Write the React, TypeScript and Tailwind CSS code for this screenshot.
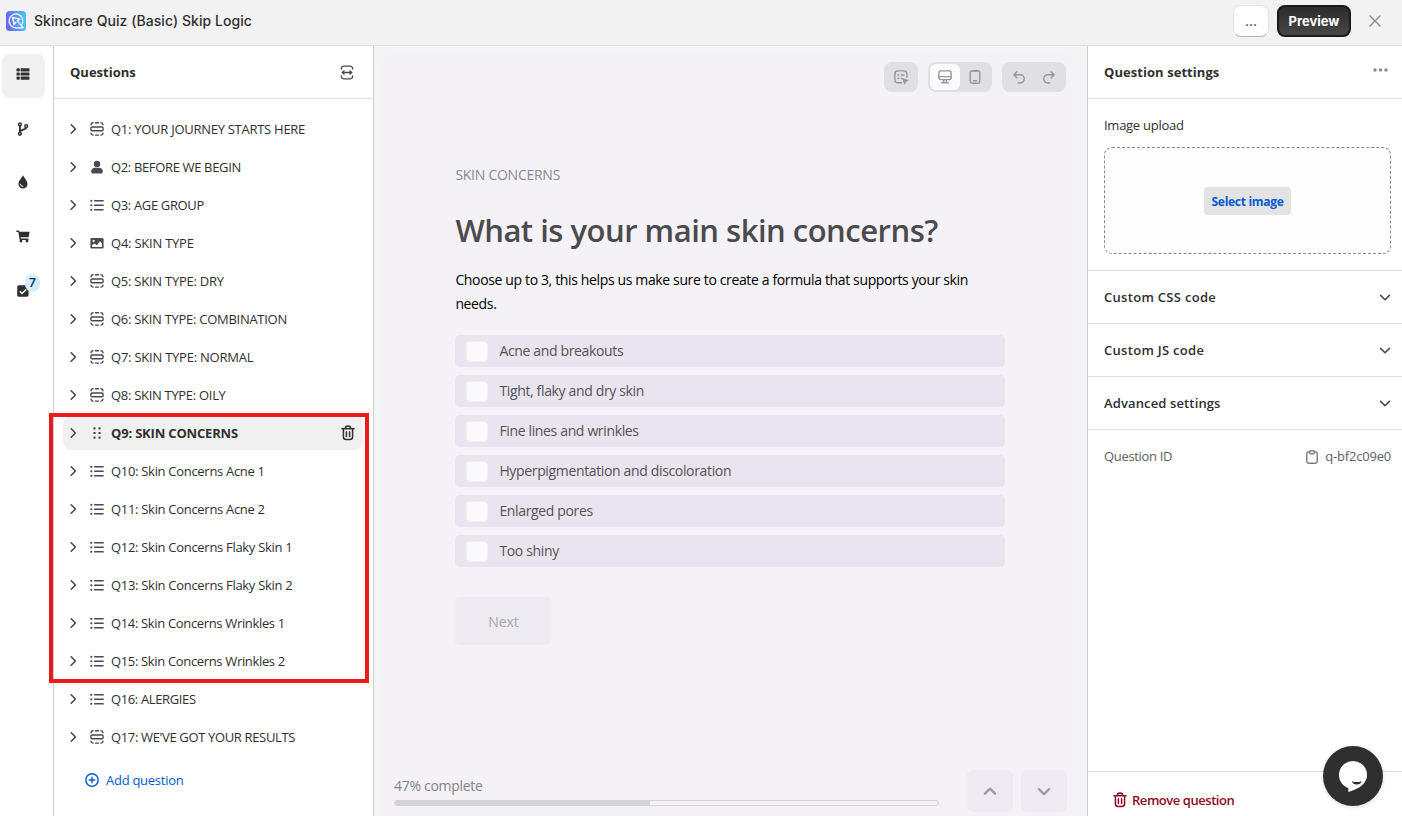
import React from "react";

type Kind = "section" | "person" | "list" | "image" | "drag";

const questions: { kind: Kind; label: string; fit: string }[] = [
  { kind: "section", label: "Q1: YOUR JOURNEY STARTS HERE", fit: "tracking-[-0.27px]" },
  { kind: "person", label: "Q2: BEFORE WE BEGIN", fit: "tracking-[-0.35px]" },
  { kind: "list", label: "Q3: AGE GROUP", fit: "tracking-[-0.35px]" },
  { kind: "image", label: "Q4: SKIN TYPE", fit: "tracking-[-0.23px]" },
  { kind: "section", label: "Q5: SKIN TYPE: DRY", fit: "tracking-[-0.25px]" },
  { kind: "section", label: "Q6: SKIN TYPE: COMBINATION", fit: "tracking-[-0.28px]" },
  { kind: "section", label: "Q7: SKIN TYPE: NORMAL", fit: "tracking-[-0.23px]" },
  { kind: "section", label: "Q8: SKIN TYPE: OILY", fit: "tracking-[-0.3px]" },
  { kind: "drag", label: "Q9: SKIN CONCERNS", fit: "tracking-[-0.18px]" },
  { kind: "list", label: "Q10: Skin Concerns Acne 1", fit: "tracking-[-0.3px]" },
  { kind: "list", label: "Q11: Skin Concerns Acne 2", fit: "tracking-[-0.3px]" },
  { kind: "list", label: "Q12: Skin Concerns Flaky Skin 1", fit: "tracking-[-0.3px]" },
  { kind: "list", label: "Q13: Skin Concerns Flaky Skin 2", fit: "tracking-[-0.3px]" },
  { kind: "list", label: "Q14: Skin Concerns Wrinkles 1", fit: "tracking-[-0.34px]" },
  { kind: "list", label: "Q15: Skin Concerns Wrinkles 2", fit: "tracking-[-0.34px]" },
  { kind: "list", label: "Q16: ALERGIES", fit: "tracking-[-0.37px]" },
  { kind: "section", label: "Q17: WE'VE GOT YOUR RESULTS", fit: "tracking-[-0.35px]" },
];

const answers = [
  "Acne and breakouts",
  "Tight, flaky and dry skin",
  "Fine lines and wrinkles",
  "Hyperpigmentation and discoloration",
  "Enlarged pores",
  "Too shiny",
];

function Logo() {
  return (
    <svg width="20" height="20" viewBox="0 0 20 20" fill="none">
      <defs>
        <linearGradient id="logo" x1="0" y1="10" x2="20" y2="8" gradientUnits="userSpaceOnUse">
          <stop stopColor="#6366f5" />
          <stop offset="0.6" stopColor="#5a9cf8" />
          <stop offset="1" stopColor="#45c4f5" />
        </linearGradient>
      </defs>
      <rect width="20" height="20" rx="3.5" fill="url(#logo)" />
      <path d="M16.9 16.8H10A6.9 6.9 0 1 1 15.9 13.4" stroke="#fff" strokeWidth="1.2" strokeLinecap="round" />
      <path d="M6.6 6.4L13.8 8.1L11.2 9.9L16.9 16.4M6.6 6.4L8 13.5L9.8 11.2" stroke="#fff" strokeWidth="1.4" strokeLinejoin="round" strokeLinecap="round" />
    </svg>
  );
}

function QuestionIcon({ kind }: { kind: Kind }) {
  if (kind === "person")
    return (
      <svg width="14" height="14" viewBox="0 0 14 14" fill="#4a4a4a">
        <circle cx="7" cy="3.9" r="3.2" />
        <path d="M1.2 11.3C1.2 9 3 7.8 5 7.8h4c2 0 3.8 1.2 3.8 3.5 0 1.4-.6 2.3-1.6 2.3H2.8c-1 0-1.6-.9-1.6-2.3z" />
      </svg>
    );
  if (kind === "list")
    return (
      <svg width="14" height="14" viewBox="0 0 14 14" fill="#4a4a4a">
        <circle cx="1.3" cy="2.8" r="1.1" />
        <circle cx="1.3" cy="7.3" r="1.1" />
        <circle cx="1.3" cy="11.8" r="1.1" />
        <rect x="4" y="2.1" width="9.8" height="1.5" rx=".7" />
        <rect x="4" y="6.6" width="9.8" height="1.5" rx=".7" />
        <rect x="4" y="11.1" width="9.8" height="1.5" rx=".7" />
      </svg>
    );
  if (kind === "image")
    return (
      <svg width="14" height="14" viewBox="0 0 14 14">
        <rect x="0.4" y="2" width="13.2" height="10.6" rx="1.4" fill="#4a4a4a" />
        <circle cx="3.6" cy="4.9" r="1.1" fill="#fff" />
        <path d="M2 11V9.2L4.5 7.6L7 9.2L9.8 5.2L12 7.2V11z" fill="#fff" />
      </svg>
    );
  if (kind === "drag")
    return (
      <svg width="14" height="14" viewBox="0 0 14 14" fill="#4a4a4a">
        <rect x="3.4" y="1.3" width="2.2" height="2.2" rx=".7" />
        <rect x="3.4" y="5.9" width="2.2" height="2.2" rx=".7" />
        <rect x="3.4" y="10.5" width="2.2" height="2.2" rx=".7" />
        <rect x="8.4" y="1.3" width="2.2" height="2.2" rx=".7" />
        <rect x="8.4" y="5.9" width="2.2" height="2.2" rx=".7" />
        <rect x="8.4" y="10.5" width="2.2" height="2.2" rx=".7" />
      </svg>
    );
  return (
    <svg width="14" height="14" viewBox="0 0 14 14" fill="none" stroke="#4a4a4a" strokeWidth="1.4" strokeLinecap="round">
      <rect x="0.9" y="5" width="12.2" height="3.8" rx="1.2" />
      <path d="M1 2.7Q1.2 .9 3 .8M5.5 .8H8.5M11 .8Q12.8 .9 13 2.7M1 11.2Q1.2 13 3 13.1M5.5 13.1H8.5M11 13.1Q12.8 13 13 11.2" />
    </svg>
  );
}

function Chevron({ d, color = "#4a4a4a", size = 12, weight = 1.6 }: { d: "right" | "down" | "up"; color?: string; size?: number; weight?: number }) {
  const paths = { right: "M4.2 1.8L8.4 6L4.2 10.2", down: "M1.6 4.4L6 8.7L10.4 4.4", up: "M1.6 8.3L6 4L10.4 8.3" };
  return (
    <svg width={size} height={size} viewBox="0 0 12 12" fill="none" stroke={color} strokeWidth={weight} strokeLinecap="round" strokeLinejoin="round">
      <path d={paths[d]} />
    </svg>
  );
}

function Trash({ color }: { color: string }) {
  return (
    <svg width="14" height="16" viewBox="0 0 14 16" fill="none" stroke={color} strokeWidth="1.5" strokeLinecap="round">
      <path d="M1 3.7H13M4.3 3.5C4.3 1.9 5.4 1.1 7 1.1S9.7 1.9 9.7 3.5M2.4 4V11.4Q2.4 14.5 5.2 14.5H8.8Q11.6 14.5 11.6 11.4V4M5.4 6.7V11.4M8.6 6.7V11.4" />
    </svg>
  );
}

function Rail() {
  return (
    <nav className="flex w-[54px] shrink-0 flex-col border-r border-[#cfcfcf] bg-white pt-2">
      <div className="ml-0.5 flex h-[44px] w-[43px] items-center justify-center rounded-lg bg-[#f1f1f1] pb-[4px] pr-px">
        <svg width="14" height="14" viewBox="0 0 14 14" fill="#303030">
          <rect x="0.5" y="1.2" width="3.3" height="3.4" rx="1" />
          <rect x="4.6" y="1.2" width="8.9" height="3.4" rx="0.7" />
          <rect x="0.5" y="5.4" width="3.3" height="3.2" rx="0.7" />
          <rect x="4.6" y="5.4" width="8.9" height="3.2" rx="0.7" />
          <rect x="0.5" y="9.4" width="3.3" height="3.4" rx="1" />
          <rect x="4.6" y="9.4" width="8.9" height="3.4" rx="0.7" />
        </svg>
      </div>
      <div className="mt-[10px] flex h-[44px] w-[46px] items-center justify-center pb-[3px]">
        <svg width="14" height="14" viewBox="0 0 14 14" fill="none" stroke="#303030" strokeWidth="1.5">
          <circle cx="3.9" cy="2.4" r="1.4" />
          <circle cx="3.9" cy="11.8" r="1.4" />
          <circle cx="10.2" cy="4.2" r="1.4" />
          <path d="M3.9 3.8V10.4M10.2 5.6C10.2 8.2 4.4 7 4 10" strokeWidth="1.8" />
        </svg>
      </div>
      <div className="mt-[10px] flex h-[44px] w-[46px] items-center justify-center pb-[4px]">
        <svg width="14" height="14" viewBox="0 0 14 14">
          <path d="M7 .3C8.2 3.2 11.5 5.5 11.5 9A4.5 4.5 0 0 1 2.5 9C2.5 5.5 5.8 3.2 7 .3z" fill="#303030" />
          <path d="M4.4 9.2A2.6 2.6 0 0 0 6.8 11.5" fill="none" stroke="#fff" strokeWidth="1" strokeLinecap="round" />
        </svg>
      </div>
      <div className="mt-[10px] flex h-[44px] w-[46px] items-center justify-center pb-[3px]">
        <svg width="14" height="13" viewBox="0 0 14 13" fill="#303030">
          <path d="M.8 .4H2.3Q3.2 .4 3.4 1.4L3.5 1.8H13.6L12.6 7.3H4.6L4.8 8.6H12.4V10H3.7L2.3 1.9H.8Q.1 1.7 .1 1.1T.8 .4z" />
          <circle cx="4.9" cy="11.1" r="1.4" />
          <circle cx="11" cy="11.1" r="1.4" />
        </svg>
      </div>
      <div className="relative mt-[10px] flex h-[44px] w-[46px] items-center justify-center pb-[3px]">
        <svg width="12" height="12" viewBox="0 0 12 12">
          <rect x="0.2" y="0.3" width="11.4" height="11.4" rx="1.6" fill="#303030" />
          <path d="M2.8 6.2L5 8.6L9.2 4.4" fill="none" stroke="#fff" strokeWidth="1.4" />
        </svg>
        <span className="absolute left-[25px] top-[4px] flex h-[18px] w-[15px] items-center justify-center rounded-full bg-[#d5ebff] font-[Inter] text-[12px] font-semibold text-[#003a5a]">
          7
        </span>
      </div>
    </nav>
  );
}

function QuestionsPanel() {
  return (
    <aside className="flex w-[320px] shrink-0 flex-col border-r border-[#cfcfcf] bg-white">
      <div className="flex h-[53px] items-center justify-between border-b border-[#e3e3e3] pl-4 pr-[19px]">
        <h2 className="pt-0.5 text-[13px] font-bold tracking-[0px] text-[#303030]">Questions</h2>
        <svg width="14" height="15" viewBox="0 0 14 15" fill="none" stroke="#4a4a4a" strokeWidth="1.4" strokeLinecap="round" strokeLinejoin="round" className="mt-px">
          <path d="M1.4 4V3.2Q1.6 1.2 3.6 1.1H10.4Q12.4 1.2 12.6 3.2V4M1.4 11V11.8Q1.6 13.8 3.6 13.9H10.4Q12.4 13.8 12.6 11.8V11M2.4 7.5H11.6M4 5.9L2.2 7.5L4 9.1M10 5.9L11.8 7.5L10 9.1" />
        </svg>
      </div>
      <ul className="flex flex-col gap-1 pl-[9px] pr-[10px] pt-[13px]">
        {questions.map((q) => (
          <li
            key={q.label}
            className={
              q.kind === "drag"
                ? "flex h-[34px] items-center rounded-lg bg-[#f0f0f0] pl-1 pr-2 font-bold"
                : "flex h-[34px] items-center rounded-lg pl-1 pr-2"
            }
          >
            <Chevron d="right" />
            <span className="ml-[11px] mr-[7px]">
              <QuestionIcon kind={q.kind} />
            </span>
            <span className={`flex-1 whitespace-nowrap pt-0.5 text-[13px] text-[#303030] ${q.fit}`}>{q.label}</span>
            {q.kind === "drag" && <Trash color="#303030" />}
          </li>
        ))}
      </ul>
      <button className="ml-[31px] mt-[15px] flex items-center gap-[7px] text-[13px] tracking-[-0.27px] text-[#005bd3]">
        <svg width="14" height="14" viewBox="0 0 14 14" fill="none" stroke="#005bd3" strokeWidth="1.4" strokeLinecap="round">
          <circle cx="7" cy="7" r="6.2" />
          <path d="M7 4.2V9.8M4.2 7H9.8" />
        </svg>
        <span className="pt-0.5">Add question</span>
      </button>
    </aside>
  );
}

function Toolbar() {
  return (
    <div className="flex justify-end gap-[10px] pr-[13px] pt-[8px]">
      <div className="flex h-[30px] w-[34px] items-center justify-center rounded-lg bg-[#e0dfe2]">
        <svg width="16" height="16" viewBox="0 0 16 16" fill="none" stroke="#979699" strokeWidth="1.4" strokeLinecap="round">
          <path d="M8.6 13.7H5Q1.9 13.7 1.9 10.4V5Q1.9 1.9 5 1.9H10.8Q13.9 1.9 13.9 5V8" />
          <path d="M4.8 6H5.8M8.4 6H11M4.8 9.4H5.8M8.2 9.4H8.6" />
          <path d="M9.6 9.4L15.2 11.4L12.9 12.5L11.8 15z" fill="#979699" strokeLinejoin="round" strokeWidth="0.8" />
        </svg>
      </div>
      <div className="flex h-[30px] w-[64px] items-center rounded-lg bg-[#e0dfe2] p-0.5">
        <div className="flex h-[26px] w-[30px] items-center justify-center rounded-md bg-[#fbfafc]">
          <svg width="14" height="14" viewBox="0 0 14 14" fill="none" stroke="#979699" strokeWidth="1.4" strokeLinecap="round">
            <rect x="0.9" y="0.9" width="12.2" height="8.7" rx="1.8" />
            <path d="M1 6.6H13M5.6 10V12.4M8.4 10V12.4M3.8 12.8H10.2" />
          </svg>
        </div>
        <div className="flex h-[26px] w-[30px] items-center justify-center">
          <svg width="12" height="14" viewBox="0 0 12 14" fill="none" stroke="#979699" strokeWidth="1.4" strokeLinecap="round">
            <rect x="1.2" y="0.8" width="9.6" height="12.4" rx="2" />
            <path d="M4.2 1.2H7.8M4.4 10.8H7.6" />
          </svg>
        </div>
      </div>
      <div className="flex h-[30px] w-[64px] items-center justify-center gap-[18px] rounded-lg bg-[#e0dfe2]">
        <svg width="12" height="13" viewBox="0 0 12 13" fill="none" stroke="#979699" strokeWidth="1.5" strokeLinecap="round" strokeLinejoin="round">
          <path d="M3.8 .9L.9 3.8L3.8 6.7M1.2 3.8H7.2A4 4 0 0 1 7.2 11.9H5.2" />
        </svg>
        <svg width="12" height="13" viewBox="0 0 12 13" fill="none" stroke="#979699" strokeWidth="1.5" strokeLinecap="round" strokeLinejoin="round">
          <path d="M8.2 .9L11.1 3.8L8.2 6.7M10.8 3.8H4.8A4 4 0 0 0 4.8 11.9H6.8" />
        </svg>
      </div>
    </div>
  );
}

function Preview() {
  return (
    <main className="min-w-0 flex-1 bg-[#f4f4f4] px-2 pt-2">
      <div className="flex h-full flex-col rounded-t-lg bg-[#f4f2f7]">
        <Toolbar />
        <div className="ml-[73.4px] mt-[72px] w-[550px]">
          <p className="text-[14px] leading-[22px] tracking-[-0.26px] text-[#8a898c]">SKIN CONCERNS</p>
          <h1 className="mt-[22px] whitespace-nowrap text-[31px] font-semibold leading-[44px] tracking-[-0.5px] text-[#4b4a4c]">
            What is your main skin concerns?
          </h1>
          <p className="mt-[16px] whitespace-nowrap text-[14px] leading-[24px] tracking-[-0.36px] text-black">
            Choose up to 3, this helps us make sure to create a formula that supports your skin
            <br />
            needs.
          </p>
          <ul className="mt-[19px] flex flex-col gap-2">
            {answers.map((a) => (
              <li key={a} className="flex h-8 items-center rounded-[5px] bg-[#e9e4ee] pl-[11px] text-[14px] leading-[20px] tracking-[-0.35px] text-[#545356]">
                <span className="mr-[11px] h-[21px] w-[22px] rounded-[4px] border border-[#f1eef4] bg-[#faf9fc]" />
                <span className="pb-px">{a}</span>
              </li>
            ))}
          </ul>
          <button className="mt-[30px] flex h-12 w-24 items-center justify-center rounded-[5px] bg-[#edeaf1] text-[14px] tracking-[-0.1px] text-[#a9a8ac]">
            Next
          </button>
        </div>
        <div className="mb-1 mt-auto flex items-end pl-3 pr-3">
          <div className="mb-[6px] w-[545px]">
            <p className="text-[14px] leading-[20px] tracking-[-0.3px] text-[#858487]">47% complete</p>
            <div className="mt-[4px] h-[6px] overflow-hidden rounded-full border border-[#d3d2d5]">
              <div className="h-full w-[47%] bg-[#d3d2d5]" />
            </div>
          </div>
          <div className="ml-auto flex gap-2">
            <div className="flex h-[42px] w-[46px] items-center justify-center rounded-md bg-[#edeaf1]">
              <Chevron d="up" color="#9c9b9e" size={14} weight={2} />
            </div>
            <div className="flex h-[42px] w-[46px] items-center justify-center rounded-md bg-[#edeaf1]">
              <Chevron d="down" color="#9c9b9e" size={14} weight={2} />
            </div>
          </div>
        </div>
      </div>
    </main>
  );
}

function Settings() {
  return (
    <aside className="flex w-[315px] shrink-0 flex-col border-l border-[#cfcfcf] bg-white text-[13px] text-[#303030]">
      <div className="flex h-[53px] shrink-0 items-center justify-between border-b border-[#e3e3e3] pl-4 pr-[14px]">
        <h2 className="pt-0.5 font-bold tracking-[0.06px]">Question settings</h2>
        <svg width="15" height="4" viewBox="0 0 15 4" fill="#8a8a8a" className="-mt-[5px]">
          <circle cx="2" cy="2" r="1.7" />
          <circle cx="7.5" cy="2" r="1.7" />
          <circle cx="13" cy="2" r="1.7" />
        </svg>
      </div>
      <div className="h-[172px] shrink-0 border-b border-[#e3e3e3] pl-4 pr-[11px] pt-[16px]">
        <p className="leading-[20px] tracking-[-0.27px]">Image upload</p>
        <div className="mt-[12px] flex h-[107px] items-center justify-center rounded-lg border border-dashed border-[#8a8a8a] bg-[#fdfdfd]">
          <button className="h-7 w-[87px] rounded bg-[#e3e3e3] pt-0.5 text-[12px] font-bold tracking-[-0.3px] text-[#005bd3]">Select image</button>
        </div>
      </div>
      {["Custom CSS code", "Custom JS code", "Advanced settings"].map((t) => (
        <div key={t} className="flex h-[53px] shrink-0 items-center justify-between border-b border-[#e0e0e0] pl-4 pr-[11px]">
          <span className={t === "Advanced settings" ? "pt-0.5 font-semibold tracking-[0.13px]" : "pt-0.5 font-semibold tracking-[0.3px]"}>{t}</span>
          <Chevron d="down" />
        </div>
      ))}
      <div className="flex h-[53px] items-center pl-4 pr-[11px] text-[#616161]">
        <span className="tracking-[-0.32px]">Question ID</span>
        <svg width="12" height="14" viewBox="0 0 12 14" fill="none" stroke="#7a7a7a" strokeWidth="1.4" className="ml-auto mr-[7px]">
          <path d="M3.6 2H2.4Q.8 2 .8 3.6V11.6Q.8 13.2 2.4 13.2H9.6Q11.2 13.2 11.2 11.6V3.6Q11.2 2 9.6 2H8.4" />
          <rect x="3.6" y="0.8" width="4.8" height="3" rx="1.2" />
        </svg>
        <span className="tracking-[-0.2px]">q-bf2c09e0</span>
      </div>
      <div className="relative mt-auto flex h-[45px] items-center border-t border-[#e0e0e0] pl-[25px] pt-3">
        <Trash color="#8e0b21" />
        <span className="ml-[5px] pt-0.5 font-semibold tracking-[-0.45px] text-[#8e0b21]">Remove question</span>
        <div className="absolute right-[19px] top-[-26px] h-[60px] w-[60px] rounded-full bg-[#2f2f2f] shadow-[0_1px_4px_rgba(0,0,0,0.15)]">
          <svg width="60" height="60" viewBox="0 0 60 60">
            <path d="M30 15A14 14 0 0 0 25.3 42.2V46C32 44 44 39.5 44 29A14 14 0 0 0 30 15z" fill="#fff" />
            <path d="M28.7 35.2Q33.5 37 38.6 35.2Q37.6 38.5 33.8 38.5Q30.2 38.5 28.7 35.2z" fill="#2f2f2f" />
          </svg>
        </div>
      </div>
    </aside>
  );
}

export default function App() {
  return (
    <div className="relative flex h-[816px] w-[1402px] flex-col overflow-hidden bg-white font-['Open_Sans','Noto_Sans',sans-serif]">
      <header className="flex h-[46px] shrink-0 items-center border-b border-[#e0e0e0] bg-[#f2f2f2] pb-[4px] pl-[6px]">
        <Logo />
        <h1 className="ml-2 font-[Inter] text-[14px] font-medium tracking-[0.06px] text-[#303030]">Skincare Quiz (Basic) Skip Logic</h1>
        <button className="ml-auto mr-2 h-8 w-9 rounded-lg border border-[#e3e3e3] border-b-[#b5b5b5] bg-white font-[Inter] text-[14px] text-[#303030]">...</button>
        <button className="h-8 w-[74px] rounded-lg border-2 border-[#1a1a1a] bg-linear-to-b from-[#2c2c2c] to-[#474747] pt-0.5 font-[Inter] text-[13px] font-bold text-white">
          Preview
        </button>
        <svg width="12" height="12" viewBox="0 0 12 12" stroke="#8a8a8a" strokeWidth="1.4" strokeLinecap="round" className="ml-[18px] mr-[21px]">
          <path d="M1 1L11 11M11 1L1 11" />
        </svg>
      </header>
      <div className="flex min-h-0 flex-1">
        <Rail />
        <QuestionsPanel />
        <Preview />
        <Settings />
      </div>
      <div className="pointer-events-none absolute left-[49px] top-[413px] h-[270px] w-[320px] border-4 border-[#e81c1c]" />
    </div>
  );
}
